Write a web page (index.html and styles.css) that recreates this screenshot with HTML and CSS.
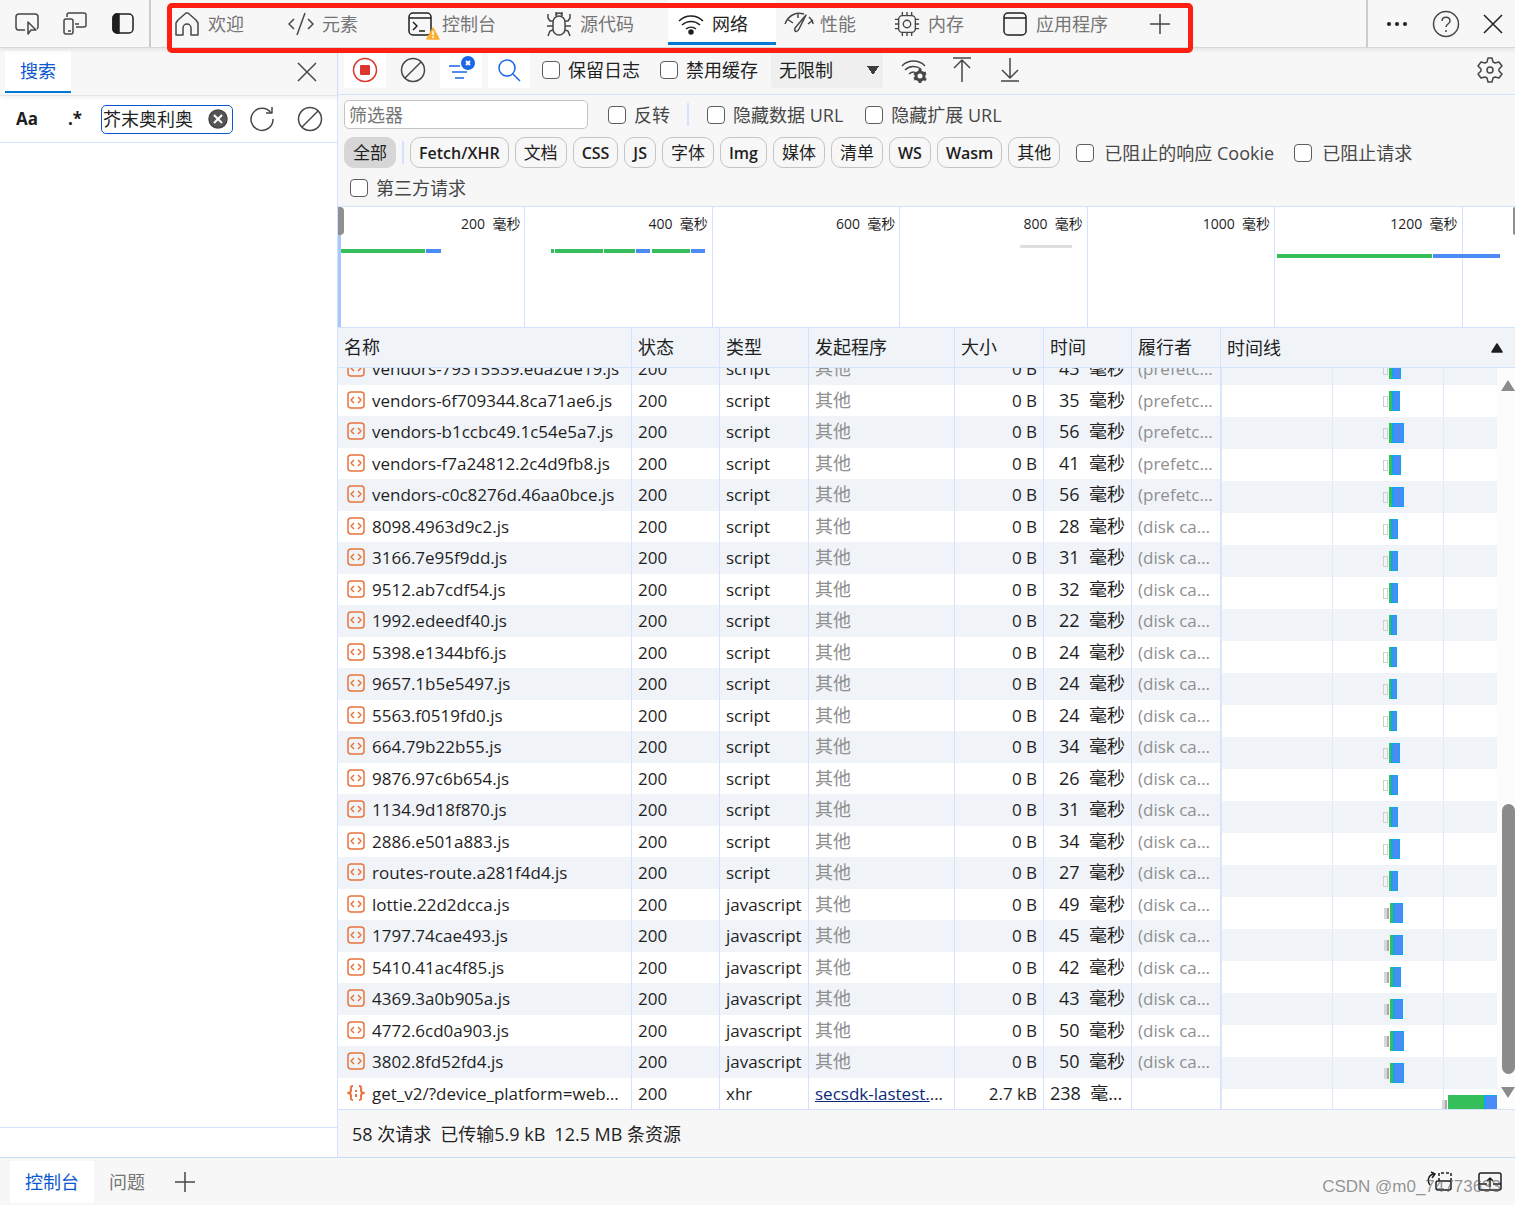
FILE: index.html
```html
<!DOCTYPE html>
<html lang="zh-CN">
<head>
  <meta charset="UTF-8">
  <meta name="viewport" content="width=device-width, initial-scale=1.0">
  <title>DevTools</title>
  <link rel="stylesheet" href="styles.css">
</head>
<body>
  <header class="topbar">
    <div class="dock">
      <button class="icon-btn" aria-label="选择元素"><svg width="26" height="26" viewBox="0 0 26 26"><path d="M11 19H4a3 3 0 0 1-2-3V6a3 3 0 0 1 3-3h16a3 3 0 0 1 3 3v10a3 3 0 0 1-1 2M14 11v12l3-4h5z"/></svg></button>
      <button class="icon-btn" aria-label="设备仿真"><svg width="26" height="26" viewBox="0 0 26 26"><path d="M5 6V4a2 2 0 0 1 2-2h15a2 2 0 0 1 2 2v10a2 2 0 0 1-2 2h-8M13 13h4M6 20h3"/><rect x="2" y="8" width="9" height="15" rx="2"/></svg></button>
      <button class="icon-btn dark" aria-label="停靠位置"><svg width="26" height="26" viewBox="0 0 26 26"><rect x="3" y="3" width="20" height="19" rx="4"/><path d="M9 3v19H7a4 4 0 0 1-4-4V7a4 4 0 0 1 4-4z" fill="currentColor"/></svg></button>
    </div>
    <nav class="tabs">
      <button class="tab gap"><svg width="26" height="26" viewBox="0 0 26 26"><path d="M2 24V12l2-3 8-7h2l8 7 2 3v12h-7v-7a4 4 0 0 0-8 0v7z"/></svg>欢迎</button>
      <button class="tab gap-lg"><svg width="26" height="26" viewBox="0 0 26 26"><path d="M6 8l-5 5 5 5M20 8l5 5-5 5M17 2L9 24"/></svg>元素</button>
      <button class="tab gap-lg"><svg class="dark" width="26" height="26" viewBox="0 0 26 26"><rect x="1" y="2" width="22" height="22" rx="4"/><path d="M1 7h22M5 11l4 4-4 4M11 20h6"/><path d="M25 17l6 11H19z" fill="#fbb034" stroke="#fbb034"/><path d="M25 20v4M25 25v2" stroke="#fff"/></svg>控制台</button>
      <button class="tab gap"><svg width="26" height="26" viewBox="0 0 26 26"><rect x="7" y="5" width="12" height="19" rx="6"/><path d="M10 5a3 3 0 0 1 6 0M10 1v3M16 1v3M7 10H4L2 7V3M19 10h3l2-3V3M1 15h6M19 15h6M7 19l-3 1-2 5M19 19l3 1 2 5"/></svg>源代码</button>
      <button class="tab active"><svg width="26" height="26" viewBox="0 0 26 26"><path d="M1 10a17 17 0 0 1 24 0M4 14a13 13 0 0 1 18 0M8 18a8 8 0 0 1 10 0"/><circle cx="13" cy="21" r="2" fill="currentColor"/></svg>网络</button>
      <button class="tab"><svg width="26" height="26" viewBox="0 0 26 26"><path d="M-1 13C3 3 11 1 18 3M1 8l6 4M12 3v4M23 6c2 2 4 4 4 7M27 9l-5 4M20 4l-7 14c-2 4-5 3-4-1z"/></svg>性能</button>
      <button class="tab"><svg width="26" height="26" viewBox="0 0 28 28"><rect x="5" y="5" width="18" height="18" rx="4"/><circle cx="14" cy="14" r="4"/><path d="M9 1v4M14 1v4M19 1v4M9 23v4M14 23v4M19 23v4M1 9h4M1 14h4M1 19h4M23 9h4M23 14h4M23 19h4"/></svg>内存</button>
      <button class="tab"><svg class="dark" width="26" height="26" viewBox="0 0 26 26"><rect x="2" y="2" width="22" height="22" rx="4"/><path d="M2 7h22"/></svg>应用程序</button>
      <button class="icon-btn add" aria-label="更多工具"><svg width="24" height="24" viewBox="0 0 24 24"><path d="M12 2v20M2 12h20"/></svg></button>
      <div class="marker"></div>
    </nav>
    <div class="window-tools">
      <button class="icon-btn dark" aria-label="自定义"><svg width="26" height="26" viewBox="0 0 26 26"><g fill="currentColor" stroke="none"><circle cx="5" cy="13" r="2"/><circle cx="13" cy="13" r="2"/><circle cx="21" cy="13" r="2"/></g></svg></button>
      <button class="icon-btn" aria-label="帮助"><svg width="28" height="28" viewBox="0 0 28 28"><circle cx="14" cy="14" r="12.5"/><path d="M10 11c0-5 8-5 8 0 0 3-4 3-4 6M14 20v2"/></svg></button>
      <button class="icon-btn dark" aria-label="关闭"><svg width="22" height="22" viewBox="0 0 22 22"><path d="M2 2l18 18M20 2L2 20"/></svg></button>
    </div>
  </header>

  <div class="workspace">
    <aside class="search">
      <div class="search-head">
        <button class="search-tab">搜索</button>
        <button class="icon-btn" aria-label="关闭搜索"><svg width="22" height="22" viewBox="0 0 22 22"><path d="M2 2l18 18M20 2L2 20"/></svg></button>
      </div>
      <div class="search-bar">
        <button class="text-btn" aria-label="区分大小写">Aa</button>
        <button class="text-btn" aria-label="正则表达式">.*</button>
        <div class="search-field">
          <input type="text" value="芥末奥利奥" aria-label="搜索">
          <button class="icon-btn" aria-label="清除"><svg width="20" height="20" viewBox="0 0 20 20"><circle cx="10" cy="10" r="9" fill="#555"/><path d="M6 6l8 8M14 6l-8 8" stroke="#fff" stroke-width="2"/></svg></button>
        </div>
        <button class="icon-btn" aria-label="刷新"><svg width="26" height="26" viewBox="0 0 26 26"><path d="M22 7a11 11 0 1 0 2 6M23 1v6h-6"/></svg></button>
        <button class="icon-btn" aria-label="清除结果"><svg width="26" height="26" viewBox="0 0 26 26"><circle cx="13" cy="13" r="11.5"/><path d="M21 5L5 21"/></svg></button>
      </div>
      <div class="search-results"></div>
      <div class="search-status"></div>
    </aside>

    <main class="network">
      <div class="toolbar">
        <button class="icon-btn tool on" aria-label="停止记录"><svg width="26" height="26" viewBox="0 0 26 26"><circle cx="13" cy="13" r="11.5" stroke="#dc362e"/><rect x="8" y="8" width="10" height="10" rx="1" fill="#dc362e" stroke="none"/></svg></button>
        <button class="icon-btn tool" aria-label="清除网络日志"><svg width="26" height="26" viewBox="0 0 26 26"><circle cx="13" cy="13" r="11.5"/><path d="M21 5L5 21"/></svg></button>
        <button class="icon-btn tool on blue" aria-label="筛选器"><svg width="28" height="28" viewBox="0 0 28 28"><path d="M2 10h11M5 16h15M8 22h9"/><circle cx="21" cy="7" r="7" fill="#1a66e8" stroke="none"/><path d="M19 5l4 4M23 5l-4 4" stroke="#fff" stroke-width="2"/></svg></button>
        <button class="icon-btn tool on blue" aria-label="搜索"><svg width="26" height="26" viewBox="0 0 26 26"><circle cx="11" cy="11" r="8"/><path d="M17 17l7 7"/></svg></button>
        <label class="check first"><input type="checkbox">保留日志</label>
        <label class="check"><input type="checkbox">禁用缓存</label>
        <select class="throttle" aria-label="节流"><option>无限制</option></select>
        <button class="icon-btn tool" aria-label="更多网络条件"><svg width="28" height="26" viewBox="0 0 28 26"><path d="M2 9a16 16 0 0 1 23 0M5 13a12 12 0 0 1 16-1M9 17a7 7 0 0 1 5-2"/><circle cx="20" cy="19" r="4" stroke-width="3"/><path d="M20 12v3M20 23v3M14 16l3 1M23 21l3 2M14 22l3-1M23 17l3-1" stroke-width="3"/></svg></button>
        <button class="icon-btn tool" aria-label="导入 HAR 文件"><svg width="24" height="26" viewBox="0 0 24 26"><path d="M3 1h18M12 25V3M4 11l8-8 8 8"/></svg></button>
        <button class="icon-btn tool" aria-label="导出 HAR 文件"><svg width="24" height="26" viewBox="0 0 24 26"><path d="M3 24h18M12 1v20M4 13l8 8 8-8"/></svg></button>
        <button class="icon-btn tool push" aria-label="网络设置"><svg width="28" height="28" viewBox="0 0 28 28"><path d="M12 2h4l1 4 2 1 4-1 3 4-3 3v2l3 3-3 4-4-1-2 1-1 4h-4l-1-4-2-1-4 1-3-4 3-3v-2l-3-3 3-4 4 1 2-1z"/><circle cx="14" cy="14" r="3"/></svg></button>
      </div>

      <div class="filters">
        <div class="filter-row">
          <input class="filter-input" type="text" placeholder="筛选器" aria-label="筛选器">
          <label class="check invert"><input type="checkbox">反转</label>
          <span class="divider"></span>
          <label class="check"><input type="checkbox">隐藏数据 URL</label>
          <label class="check"><input type="checkbox">隐藏扩展 URL</label>
        </div>
        <div class="chip-row">
          <button class="chip zh selected">全部</button>
          <span class="divider"></span>
          <button class="chip">Fetch/XHR</button>
          <button class="chip zh">文档</button>
          <button class="chip">CSS</button>
          <button class="chip">JS</button>
          <button class="chip zh">字体</button>
          <button class="chip">Img</button>
          <button class="chip zh">媒体</button>
          <button class="chip zh">清单</button>
          <button class="chip">WS</button>
          <button class="chip">Wasm</button>
          <button class="chip zh">其他</button>
          <label class="check blocked"><input type="checkbox">已阻止的响应 Cookie</label>
          <label class="check blocked"><input type="checkbox">已阻止请求</label>
        </div>
        <div class="third-row">
          <label class="check"><input type="checkbox">第三方请求</label>
        </div>
      </div>

      <div class="overview">
        <div class="tick">200 &nbsp;毫秒</div>
        <div class="tick">400 &nbsp;毫秒</div>
        <div class="tick">600 &nbsp;毫秒</div>
        <div class="tick">800 &nbsp;毫秒</div>
        <div class="tick">1000 &nbsp;毫秒</div>
        <div class="tick">1200 &nbsp;毫秒</div>
        <svg class="overview-bars" viewBox="0 0 1177 120" preserveAspectRatio="none">
          <g fill="#34bf5b">
            <rect x="3" y="42" width="84" height="4"/>
            <rect x="213" y="42" width="3" height="4"/>
            <rect x="217" y="42" width="48" height="4"/>
            <rect x="266" y="42" width="31" height="4"/>
            <rect x="314" y="42" width="38" height="4"/>
            <rect x="939" y="47" width="155" height="4"/>
          </g>
          <g fill="#4c8bf5">
            <rect x="88" y="42" width="15" height="4"/>
            <rect x="298" y="42" width="14" height="4"/>
            <rect x="353" y="42" width="14" height="4"/>
            <rect x="1095" y="47" width="67" height="4"/>
          </g>
          <rect x="682" y="38" width="52" height="3" fill="#dedede"/>
        </svg>
        <span class="handle handle-left"></span>
        <span class="handle handle-right"></span>
      </div>

      <div class="requests">
        <table class="grid">
          <thead>
            <tr><th>名称</th><th>状态</th><th>类型</th><th>发起程序</th><th>大小</th><th>时间</th><th>履行者</th></tr>
          </thead>
          <tbody id="rows"></tbody>
        </table>
        <section class="waterfall">
          <button class="waterfall-head">时间线<svg width="12" height="10" viewBox="0 0 12 10"><path d="M6 1l5 8H1z" fill="currentColor"/></svg></button>
          <div class="waterfall-body">
            <div class="lanes" id="lanes"></div>
            <div class="scrollbar"><span class="arrow-up"></span><span class="thumb"></span><span class="arrow-down"></span></div>
          </div>
        </section>
      </div>

      <footer class="summary"><span>58 次请求</span><span>已传输5.9 kB</span><span>12.5 MB 条资源</span></footer>
    </main>
  </div>

  <footer class="drawer">
    <button class="drawer-tab current">控制台</button>
    <button class="drawer-tab">问题</button>
    <button class="icon-btn" aria-label="更多工具"><svg width="24" height="24" viewBox="0 0 24 24"><path d="M12 2v20M2 12h20"/></svg></button>
    <div class="drawer-tools">
      <button class="icon-btn dark" aria-label="移动抽屉"><svg width="26" height="22" viewBox="0 0 26 22"><path d="M7 3C1 4 0 10 3 14M4 1l4 2-3 4"/><path d="M12 10V2h12v8" stroke-dasharray="3 2"/><rect x="9" y="10" width="15" height="9" rx="2"/></svg></button>
      <button class="icon-btn dark" aria-label="展开抽屉"><svg width="26" height="22" viewBox="0 0 26 22"><rect x="2" y="2" width="22" height="17" rx="2"/><path d="M2 13h8M16 13h8M13 16V7M10 10l3-3 3 3"/></svg></button>
    </div>
    <span class="watermark">CSDN @m0_74773633</span>
  </footer>

  <script src="script.js"></script>
</body>
</html>
```
FILE: styles.css
```css
* {
  box-sizing: border-box;
}

body {
  margin: 0;
  height: 100vh;
  display: flex;
  flex-direction: column;
  overflow: hidden;
  background: #f7f7f7;
  color: #1f1f1f;
  font-family: "Open Sans", "Noto Sans CJK SC", sans-serif;
  font-size: 18px;
  line-height: 24px;
}

button,
input,
select {
  font: inherit;
  color: inherit;
}

button {
  border: 0;
  padding: 0;
  background: none;
}

svg {
  display: block;
  flex: none;
  fill: none;
  stroke: currentColor;
  stroke-width: 1.5;
  stroke-linejoin: round;
}

.icon-btn {
  display: flex;
  align-items: center;
  justify-content: center;
  color: #474747;
}

.dark {
  color: #1f1f1f;
}

/* top bar */
.topbar {
  position: relative;
  z-index: 2;
  flex: none;
  display: flex;
  height: 48px;
  border-bottom: 1px solid #d8d8d8;
  box-shadow: 0 2px 4px rgba(0, 0, 0, 0.08);
}

.dock {
  display: flex;
  gap: 22px;
  padding: 0 13px 0 14px;
  border-right: 2px solid #c9ccd1;
}

.tabs {
  position: relative;
  display: flex;
  margin-left: 13px;
  padding-right: 9px;
}

.tab {
  display: flex;
  align-items: center;
  gap: 8px;
  padding: 0 28px 0 10px;
  color: #757575;
  white-space: nowrap;
}

.tab svg {
  color: #474747;
  overflow: visible;
}

.tab svg.dark {
  color: #1f1f1f;
}

.gap {
  margin-right: 6px;
}

.gap-lg {
  margin-right: 12px;
}

.tab.active {
  background: #fff;
  color: #1f1f1f;
  box-shadow: inset 0 -2px #f7f7f7, inset 0 -5px #0078d4;
}

.tab.active svg {
  color: #1f1f1f;
}

.add {
  width: 48px;
}

.marker {
  position: absolute;
  inset: 3px 0 -6px 3px;
  border: 5px solid #ff1f12;
  border-radius: 5px;
  pointer-events: none;
}

.window-tools {
  display: flex;
  gap: 22px;
  margin-left: auto;
  padding: 0 11px 0 16px;
  border-left: 2px solid #c9ccd1;
}

.workspace {
  flex: 1;
  min-height: 0;
  display: flex;
}

/* search pane */
.search {
  flex: none;
  width: 338px;
  display: flex;
  flex-direction: column;
  border-right: 1px solid #d3e3fd;
  background: #fff;
}

.search-head {
  display: flex;
  justify-content: space-between;
  height: 48px;
  padding: 3px 19px 2px 5px;
  background: #f7f7f7;
  border-bottom: 1px solid #e4e4e4;
  box-shadow: 0 2px 4px rgba(0, 0, 0, 0.06);
}

.search-tab {
  width: 66px;
  background: #fff;
  border-bottom: 2px solid #0078d4;
  color: #0b57d0;
}

.search-bar {
  display: flex;
  align-items: center;
  height: 47px;
  padding: 0 14px;
  border-bottom: 1px solid #d3e3fd;
}

.text-btn {
  flex: none;
  width: 26px;
  margin-right: 22px;
  font-size: 17px;
  font-weight: 700;
}

.text-btn + .text-btn {
  margin-right: 13px;
}

.search-field {
  display: flex;
  flex: 1;
  min-width: 0;
  height: 29px;
  margin-right: 16px;
  padding-right: 4px;
  border: 1px solid #0b57d0;
  border-radius: 5px;
}

.search-field input {
  flex: 1;
  width: 0;
  min-width: 0;
  padding: 0 1px;
  border: 0;
  outline: 0;
  background: none;
}

.search-bar > .icon-btn + .icon-btn {
  margin-left: 22px;
}

.search-results {
  flex: 1;
}

.search-status {
  height: 30px;
  border-top: 1px solid #d3e3fd;
}

/* network pane */
.network {
  flex: 1;
  min-width: 0;
  display: flex;
  flex-direction: column;
}

.toolbar {
  flex: none;
  display: flex;
  align-items: center;
  height: 47px;
  padding: 0 4px 2px 6px;
  border-bottom: 1px solid #d3e3fd;
}

.tool {
  width: 42px;
  height: 36px;
  margin-right: 6px;
  border-radius: 2px;
}

.on {
  background: #fff;
}

.blue {
  color: #1a66e8;
}

.push {
  margin: 0 0 0 auto;
}

.check {
  display: flex;
  align-items: center;
  gap: 8px;
  margin-right: 20px;
  white-space: nowrap;
}

.check input {
  appearance: none;
  width: 18px;
  height: 18px;
  margin: 0;
  border: 1px solid #5e5e5e;
  border-radius: 4px;
  background: #fff;
}

.check.first {
  margin-left: 6px;
}

.throttle {
  appearance: none;
  width: 112px;
  height: 36px;
  margin: 0 10px 0 -7px;
  padding: 0 8px;
  border: 0;
  border-radius: 2px;
  background-color: #efefef;
  background-image: conic-gradient(from -31deg at 50% 100%, #3c3c3c 62deg, transparent 0);
  background-image: conic-gradient(from -34deg at 50% 100%, #3c3c3c 68deg, transparent 0);
  background-repeat: no-repeat;
  background-size: 12px 9px;
  background-position: right 4px center;
}

.filters {
  flex: none;
  padding: 5px 6px 0;
  height: 111px;
  color: #474747;
}

.filter-row,
.chip-row,
.third-row {
  display: flex;
  align-items: center;
}

.filter-input {
  width: 244px;
  height: 29px;
  padding: 0 4px;
  border: 1px solid #c4c4c4;
  border-radius: 5px;
  background: #fff;
}

.filter-input::placeholder {
  color: #757575;
}

.check.invert {
  margin: 0 17px 0 20px;
}

.divider {
  width: 2px;
  height: 23px;
  background: #d3e3fd;
}

.filter-row .divider {
  margin-right: 18px;
}

.filter-row .check:nth-child(n + 4) {
  margin-right: 22px;
}

.chip-row {
  gap: 6px;
  margin-top: 8px;
}

.chip {
  height: 31px;
  padding: 0 8px;
  border: 1px solid #c4c4c4;
  border-radius: 10px;
  color: #1f1f1f;
  font-size: 16px;
  font-weight: 600;
  white-space: nowrap;
}

.chip.zh {
  font-size: 17px;
  font-weight: 400;
}

.chip.selected {
  background: #d6d6d6;
  border-color: #d6d6d6;
}

.check.blocked {
  gap: 10px;
  margin: 0 4px 0 10px;
}

.third-row {
  margin: 8px 0 0 6px;
}

/* overview */
.overview {
  position: relative;
  flex: none;
  display: grid;
  grid-template-columns: repeat(6, 375fr) 105fr;
  height: 122px;
  border-top: 1px solid #d3e3fd;
  border-bottom: 1px solid #d3e3fd;
  background: #fff;
  font-size: 14px;
}

.tick {
  padding: 5px 4px 0 0;
  border-right: 1px solid #d3e3fd;
  text-align: right;
}

.overview-bars {
  position: absolute;
  inset: 0;
  width: 100%;
  height: 100%;
  stroke: none;
}

.handle {
  position: absolute;
  top: 0;
  width: 6px;
  height: 28px;
  border-radius: 0 4px 4px 0;
  background: #8f8f8f;
}

.handle-left {
  left: 0;
}

.overview::before {
  content: "";
  position: absolute;
  inset: 0 auto 0 0;
  width: 3px;
  background: #a8c7fa;
}

.handle-right {
  right: 0;
  width: 2px;
  border-radius: 4px 0 0 4px;
}

/* requests */
.requests {
  flex: 1;
  min-height: 0;
  display: flex;
  background: #fff;
}

.grid {
  flex: 883;
  min-width: 0;
  display: flex;
  flex-direction: column;
  font-size: 17px;
}

.grid thead {
  flex: none;
}

.grid tbody {
  flex: 1;
  min-height: 0;
  display: flex;
  flex-direction: column;
  justify-content: flex-end;
  overflow: hidden;
}

.grid tr {
  flex: none;
  display: grid;
  grid-template-columns: minmax(0, 294fr) minmax(0, 88fr) minmax(0, 89fr) minmax(0, 146fr) minmax(0, 89fr) minmax(0, 88fr) minmax(0, 89fr);
  height: 31px;
}

.grid tbody tr:nth-child(odd) {
  height: 32px;
  background: #f0f4f9;
}

.grid thead tr {
  height: 40px;
  background: #f0f4f9;
  border-bottom: 1px solid #d3e3fd;
}

.grid th,
.grid td {
  padding: 0 6px;
  border-right: 1px solid #d3e3fd;
  line-height: 31px;
  text-align: left;
  white-space: nowrap;
  overflow: hidden;
  text-overflow: ellipsis;
}

.grid th {
  font-size: 18px;
  font-weight: 400;
  line-height: 39px;
}

.grid td.name {
  display: flex;
  gap: 7px;
  align-items: flex-start;
  padding-left: 9px;
}

.name span {
  overflow: hidden;
  text-overflow: ellipsis;
}

.name svg {
  margin-top: 6px;
  color: #e8743b;
}

.grid td.muted {
  color: #8f8f8f;
}

.grid td.zh,
.grid td.time {
  font-size: 18px;
}

.grid td.size,
.grid td.time {
  text-align: right;
}

.grid a {
  color: #0b2a7a;
}

.waterfall {
  flex: 294;
  min-width: 0;
  display: flex;
  flex-direction: column;
}

.waterfall-head {
  flex: none;
  display: flex;
  align-items: center;
  justify-content: space-between;
  height: 40px;
  padding: 0 12px 0 6px;
  border-bottom: 1px solid #d3e3fd;
  background: #f0f4f9;
}

.waterfall-body {
  flex: 1;
  min-height: 0;
  display: flex;
}

.lanes {
  flex: 1;
  overflow: hidden;
}

.lane {
  display: flex;
  align-items: flex-end;
  height: 32px;
  padding: 0 0 6px 58%;
  background-image: repeating-linear-gradient(90deg, #dfe9f8 0 1px, transparent 1px 111px);
}

.lane:nth-child(odd) {
  background-color: #f0f4f9;
}

/* the first lane is scrolled half out of view */
.lane:first-child {
  height: 17px;
  overflow: hidden;
}

.lane.late {
  padding-left: 79%;
  overflow: hidden;
}

.queue {
  flex: none;
  width: 5px;
  height: 11px;
  margin: 0 1px 4px 2px;
  border: 1px solid #cfcfcf;
}

.queue.solid {
  margin-left: 3px;
  border: 0;
  border-right: 2px solid #a9a9a9;
  background: #d6d6d6;
}

.wait,
.download {
  flex: none;
  height: 20px;
  background: #34bf5b;
}

.download {
  background: #4c8bf5;
  border: solid #0ea5f5;
  border-width: 1px 1px 1px 2px;
}

.scrollbar {
  flex: none;
  display: flex;
  flex-direction: column;
  align-items: center;
  width: 18px;
  padding: 12px 0 11px 4px;
  background: #fcfcfc;
}

.arrow-up,
.arrow-down {
  border: 7px solid transparent;
}

.arrow-up {
  border-top: 0;
  border-bottom: 11px solid #8b8b8b;
}

.arrow-down {
  margin-top: 13px;
  border-bottom: 0;
  border-top: 11px solid #8b8b8b;
}

.thumb {
  width: 13px;
  height: 270px;
  margin-top: auto;
  border-radius: 7px;
  background: #8b8b8b;
}

.summary {
  flex: none;
  display: flex;
  align-items: center;
  gap: 9px;
  height: 48px;
  padding-left: 14px;
  border-top: 1px solid #d3e3fd;
}

/* drawer */
.drawer {
  position: relative;
  flex: none;
  display: flex;
  height: 48px;
  padding: 3px 12px 2px 10px;
  border-top: 1px solid #c9dcf5;
}

.drawer-tab {
  padding: 0 15px;
  color: #757575;
}

.drawer-tab.current {
  background: #fff;
  color: #0b57d0;
}

.drawer > .icon-btn {
  margin-left: 13px;
}

.drawer-tools {
  display: flex;
  gap: 24px;
  margin-left: auto;
}

.watermark {
  position: absolute;
  right: 14px;
  bottom: 6px;
  color: rgba(90, 90, 90, 0.65);
  font-family: "Liberation Sans", sans-serif;
  font-size: 17px;
}
```
FILE: script.js
```js
const SCRIPT_ICON = '<svg width="18" height="18" viewBox="0 0 18 18"><rect x="1" y="1" width="16" height="16" rx="3"/><path d="M7 6L4 9l3 3M11 6l3 3-3 3"/></svg>';
const JSON_ICON = '<svg width="18" height="18" viewBox="0 0 18 18"><path stroke-width="2" d="M6 2C3 2 4 4 4 6s-1 3-3 3c2 0 3 1 3 3s-1 4 2 4M12 2c3 0 2 2 2 4s1 3 3 3c-2 0-3 1-3 3s1 4-2 4M9 6v2M9 10v3"/></svg>';

// name, type, time, source, wait width, download width
const requests = [
  ['vendors-79315539.eda2de19.js', 'script', 43, '(prefetch cache)', 3, 9],
  ['vendors-6f709344.8ca71ae6.js', 'script', 35, '(prefetch cache)', 3, 8],
  ['vendors-b1ccbc49.1c54e5a7.js', 'script', 56, '(prefetch cache)', 3, 12],
  ['vendors-f7a24812.2c4d9fb8.js', 'script', 41, '(prefetch cache)', 3, 9],
  ['vendors-c0c8276d.46aa0bce.js', 'script', 56, '(prefetch cache)', 3, 12],
  ['8098.4963d9c2.js', 'script', 28, '(disk cache)', 2, 7],
  ['3166.7e95f9dd.js', 'script', 31, '(disk cache)', 2, 7],
  ['9512.ab7cdf54.js', 'script', 32, '(disk cache)', 2, 7],
  ['1992.edeedf40.js', 'script', 22, '(disk cache)', 2, 6],
  ['5398.e1344bf6.js', 'script', 24, '(disk cache)', 2, 6],
  ['9657.1b5e5497.js', 'script', 24, '(disk cache)', 2, 6],
  ['5563.f0519fd0.js', 'script', 24, '(disk cache)', 2, 6],
  ['664.79b22b55.js', 'script', 34, '(disk cache)', 2, 9],
  ['9876.97c6b654.js', 'script', 26, '(disk cache)', 2, 7],
  ['1134.9d18f870.js', 'script', 31, '(disk cache)', 2, 7],
  ['2886.e501a883.js', 'script', 34, '(disk cache)', 2, 9],
  ['routes-route.a281f4d4.js', 'script', 27, '(disk cache)', 2, 7],
  ['lottie.22d2dcca.js', 'javascript', 49, '(disk cache)', 3, 10],
  ['1797.74cae493.js', 'javascript', 45, '(disk cache)', 3, 10],
  ['5410.41ac4f85.js', 'javascript', 42, '(disk cache)', 3, 8],
  ['4369.3a0b905a.js', 'javascript', 43, '(disk cache)', 3, 10],
  ['4772.6cd0a903.js', 'javascript', 50, '(disk cache)', 3, 11],
  ['3802.8fd52fd4.js', 'javascript', 50, '(disk cache)', 3, 11],
  ['get_v2/?device_platform=webapp', 'xhr', 238, '', 36, 20]
];

const rows = document.getElementById('rows');
const lanes = document.getElementById('lanes');

requests.forEach(([name, type, time, source, wait, download]) => {
  const xhr = type === 'xhr';
  const initiator = xhr
    ? '<td><a href="#">secsdk-lastest.umd.js</a></td>'
    : '<td class="zh muted">其他</td>';

  rows.insertAdjacentHTML('beforeend', `<tr>
    <td class="name">${xhr ? JSON_ICON : SCRIPT_ICON}<span>${name}</span></td>
    <td>200</td>
    <td>${type}</td>
    ${initiator}
    <td class="size">${xhr ? '2.7 kB' : '0 B'}</td>
    <td class="time">${time} &nbsp;毫秒</td>
    <td class="muted">${source}</td>
  </tr>`);

  const solid = type !== 'script' ? ' solid' : '';
  lanes.insertAdjacentHTML('beforeend', `<div class="lane${xhr ? ' late' : ''}">
    <span class="queue${solid}"></span>
    <span class="wait" style="width: ${wait}px"></span>
    <span class="download" style="width: ${download}px"></span>
  </div>`);
});
```
